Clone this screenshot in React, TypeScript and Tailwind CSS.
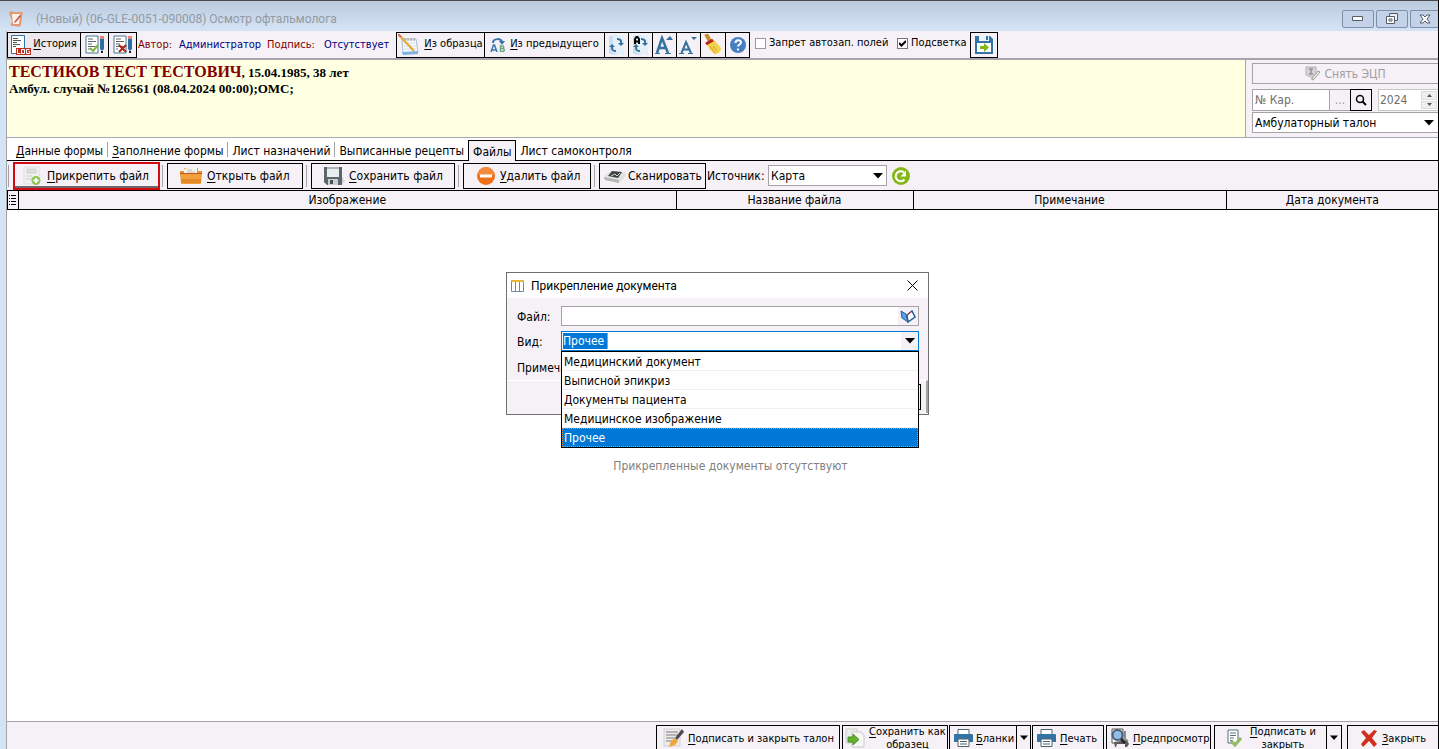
import type { ReactNode } from "react";

const files = ["Медицинский документ", "Выписной эпикриз", "Документы пациента", "Медицинское изображение", "Прочее"];

const tabs = [
  { key: "Д", rest: "анные формы" },
  { key: "З", rest: "аполнение формы" },
  { key: "", rest: "Лист назначений" },
  { key: "", rest: "Выписанные рецепты" },
  { key: "", rest: "Файлы", active: true },
  { key: "", rest: "Лист самоконтроля", last: true },
];

function Hot({ k, children }: { k: string; children: ReactNode }) {
  return (
    <span className="whitespace-nowrap">
      <u className="underline-offset-2">{k}</u>
      {children}
    </span>
  );
}

function Arrow({ small }: { small?: boolean }) {
  return (
    <svg width={small ? 8 : 10} height="6" viewBox="0 0 10 6" className="shrink-0">
      <path d="M0 0h10L5 5.5z" fill="#000" />
    </svg>
  );
}

/* ---------- icons ---------- */

function AppIcon() {
  return (
    <svg width="16" height="18" viewBox="0 0 16 18">
      <path d="M1 3c1-2 3-2 5-1h7c2 0 2 2 1 4l-1 9c-1 2-3 2-5 1H4c-2 0-1-3 0-5z" fill="#e39a74" />
      <path d="M4 4h8l-1 10H5z" fill="#fdf1e8" />
      <path d="M12 5l-5 6-1 2 2-1 5-6z" fill="#b5483a" />
    </svg>
  );
}

function LogIcon() {
  return (
    <svg width="20" height="20" viewBox="0 0 20 20">
      <path d="M.5.5h13v18H.5z" fill="#fff" stroke="#3574a8" />
      <path d="M2 3.500h5M2 5.500h8M2 7.500h4M2 9.500h7M2 11.500h3" stroke="#555" />
      <path d="M5 13h15v7H5z" fill="#b9321f" />
      <path d="M6.500 14v4.500h3M10.500 14.500h3v4h-3zM18.500 14.500h-3v4h3v-2h-1" fill="none" stroke="#fff" />
    </svg>
  );
}

function SheetIcon({ ok }: { ok?: boolean }) {
  return (
    <svg width="20" height="20" viewBox="0 0 20 20">
      <path d="M1 1h12v17H1z" fill="#fff" stroke="#47788f" />
      <path d="M3 4h5M3 6.500h8M3 9h4M3 11.500h7M3 14h2" stroke="#666" />
      <path d="M15 1h4v3h-4z" fill="#e8837c" />
      <path d="M15 4h4v10l-2 2-2-2z" fill="#2d6da3" />
      <path d="M16 16h2v2h-2z" fill="#222" />
      {ok ? (
        <path d="M5 13l3 3 5-6" fill="none" stroke="#7db53c" strokeWidth="2" />
      ) : (
        <path d="M6 10l7 7M13 10l-7 7" stroke="#b02418" strokeWidth="2" />
      )}
    </svg>
  );
}

function NotepadIcon() {
  return (
    <svg width="22" height="22" viewBox="0 0 22 22">
      <path d="M4 5h14l2 13-15 2z" fill="#f4f8fc" stroke="#a9bfd4" />
      <path d="M4 18l16-1v3l-15 1z" fill="#7fb2dd" />
      <path d="M6 9h11M6 12h12M6 15h12" stroke="#d5dee8" />
      <path d="M7 4v3M10 4v3M13 4v3M16 4v3" stroke="#999" />
      <path d="M1 1l15 16" stroke="#e8a62c" strokeWidth="2" />
      <path d="M0 0l3 3" stroke="#d9695a" strokeWidth="2" />
    </svg>
  );
}

function PrevIcon() {
  return (
    <svg width="16" height="14" viewBox="0 0 16 14">
      <path d="M3 5c0-5 9-5 9-1" fill="none" stroke="#3777ad" strokeWidth="2" />
      <path d="M9 3h6l-3 4z" fill="#3777ad" />
      <path d="M1 14l2.500-7h1l2.500 7M2 12h4" fill="none" stroke="#3777ad" strokeWidth="1.500" />
      <path d="M10.500 8h2.500q1.500 1.500 0 2.500h-2.500h3q1.500 1.500 0 3h-3z" fill="none" stroke="#6aa585" strokeWidth="1.500" />
    </svg>
  );
}

function SwapIcon({ bold }: { bold?: boolean }) {
  return (
    <svg width="18" height="22" viewBox="0 0 18 22">
      <path d="M1 2l8-1v20l-8-1z" fill="#c9e0f3" />
      <path d="M5 2l11-1v20l-11-2z" fill="#e3f0fa" />
      <path d="M9 5c4 0 4.500 2 4 5M8 17c-4 0-4-2-4-5" fill="none" stroke="#356f9b" strokeWidth="2" />
      <path d="M10 9h6l-3 3zM1 13h6l-3-3z" fill="#356f9b" />
      {bold && <path d="M3 10V5l1.500-2h1L7 5v5M3 7.500h4" fill="none" stroke="#000" strokeWidth="2" />}
    </svg>
  );
}

function FontIcon({ up }: { up?: boolean }) {
  return up ? (
    <svg width="20" height="20" viewBox="0 0 20 20">
      <path d="M2 18L7 3l6 15M4 13h7" fill="none" stroke="#33719f" strokeWidth="2.500" />
      <path d="M0 18.500h5M10 18.500h6" stroke="#33719f" />
      <path d="M11 5l4-4 3 4z" fill="#33719f" />
    </svg>
  ) : (
    <svg width="20" height="20" viewBox="0 0 20 20">
      <path d="M2.500 18L7 7l5 11M4 14.500h6" fill="none" stroke="#33719f" strokeWidth="2" />
      <path d="M0 18.500h5M9 18.500h5" stroke="#33719f" />
      <path d="M12 2h6l-3 3z" fill="#33719f" />
    </svg>
  );
}

function BroomIcon() {
  return (
    <svg width="20" height="22" viewBox="0 0 20 22">
      <path d="M3 0l5 9" stroke="#c98b2b" strokeWidth="4" />
      <path d="M4 10l7-4 7 8c0 4-3 6-7 6-3-3-6-6-7-10z" fill="#f3d34a" />
      <path d="M7 12l5 7M10 12l4 5" stroke="#cfa233" />
      <path d="M3 10l7-4" stroke="#b3261a" strokeWidth="3" />
    </svg>
  );
}

function HelpIcon() {
  return (
    <svg width="18" height="18" viewBox="0 0 18 18">
      <circle cx="9" cy="9" r="8" fill="#4680c2" />
      <path d="M6.500 7c0-3.500 5.500-3.500 5.500-.5 0 2-3 2-3 4M9 12.500v2" fill="none" stroke="#fff" strokeWidth="2" />
    </svg>
  );
}

function SaveIcon() {
  return (
    <svg width="18" height="18" viewBox="0 0 18 18">
      <path d="M0 0h15l3 3v15H0z" fill="#3273a8" />
      <path d="M4 0h10v5H4z" fill="#eef3f8" />
      <path d="M11 0h2v4h-2z" fill="#3273a8" />
      <path d="M2 7h14v9H2z" fill="#fff" />
      <path d="M5 10h4V7l5 4.500L9 16v-3H5z" fill="#84b818" />
    </svg>
  );
}

function StampIcon() {
  return (
    <svg width="15" height="15" viewBox="0 0 15 15">
      <path d="M1 1h10v8l-3 3-7-3z" fill="#d6d4d6" stroke="#b5b3b5" />
      <path d="M4 3h4M6 3v5M4 8h4" stroke="#959395" strokeWidth="1.500" />
      <path d="M13 5L7 12l0 2 2-1 6-7z" fill="#eee" stroke="#999" />
    </svg>
  );
}

function AttachIcon() {
  return (
    <svg width="18" height="20" viewBox="0 0 18 20">
      <path d="M1 1h15v17H1z" fill="#f1f0f1" stroke="#e0dfe0" />
      <path d="M4 3h9v4H4zM3 10h6M3 13h6" fill="#dedede" stroke="#d0d0d0" />
      <circle cx="13" cy="14.500" r="4.500" fill="#8fc653" />
      <path d="M13 12v5M10.500 14.500h5" stroke="#fff" strokeWidth="2" />
    </svg>
  );
}

function FolderIcon() {
  return (
    <svg width="22" height="19" viewBox="0 0 22 19">
      <path d="M0 5h4V2h14v3h4v4H0z" fill="#e89133" />
      <path d="M4 3l9-3 4 2v6H4z" fill="#f6f2ee" />
      <path d="M7 4h5M7 6h8" stroke="#c7bfb9" />
      <path d="M0 8h22l-1 9q0 1-1 1H2q-1 0-1-1z" fill="#f0a03c" />
      <path d="M0 7.500h22" stroke="#c2571b" />
      <path d="M1 13h20v4H1z" fill="#e28828" />
    </svg>
  );
}

function DiskIcon() {
  return (
    <svg width="22" height="20" viewBox="0 0 22 20">
      <path d="M16 17l3-6 3 4-4 4z" fill="#d5d3d6" />
      <path d="M1 1h18v18H4l-3-3z" fill="#5b666d" />
      <path d="M4 1h12v10H4z" fill="#e8eef0" />
      <path d="M4 1h12v2H4z" fill="#a9b6bb" />
      <path d="M5 13h10v6H5z" fill="#c9cfd2" />
      <path d="M7 14h3v4H7z" fill="#475259" />
    </svg>
  );
}

function MinusIcon() {
  return (
    <svg width="20" height="20" viewBox="0 0 20 20">
      <circle cx="10" cy="10" r="9" fill="#f0701a" />
      <path d="M2 9a8 8 0 0 1 16 0z" fill="#f58a3c" />
      <path d="M4 8.500h12v3H4z" fill="#fff" />
    </svg>
  );
}

function ScannerIcon() {
  return (
    <svg width="22" height="17" viewBox="0 0 22 17">
      <path d="M0 9l6-4 15 0 1 4-7 7-14-3z" fill="#e3e2e2" />
      <path d="M0 10l15 3v3l-14-3z" fill="#b5b5b5" />
      <path d="M4 9l4-5 10 1-4 6z" fill="#3e4241" />
      <path d="M7 9l4-2 2 2 3-3" stroke="#cfcfcf" fill="none" />
    </svg>
  );
}

function RefreshIcon() {
  return (
    <svg width="18" height="18" viewBox="0 0 18 18">
      <circle cx="9" cy="9" r="9" fill="#84b818" />
      <path d="M12.500 12.500A5 5 0 1 1 12 5.500" fill="none" stroke="#fff" strokeWidth="2" />
      <path d="M14 3.500v6H8.500z" fill="#fff" />
    </svg>
  );
}

function SignIcon() {
  return (
    <svg width="21" height="20" viewBox="0 0 21 20">
      <path d="M1 1h16v17H1z" fill="#ececec" stroke="#d2d2d2" />
      <path d="M3 4h12M3 7h12M3 10h9M3 13h6" stroke="#7d7d7d" />
      <path d="M19 1l-7 9 2 2 7-8z" fill="#4b4a4e" />
      <path d="M12 10l3 3-3 4-6 2 2-6z" fill="#f0a53a" />
    </svg>
  );
}

function CopyIcon() {
  return (
    <svg width="20" height="20" viewBox="0 0 20 20">
      <path d="M1 1h11v14H1z" fill="#ececec" stroke="#cfcfcf" />
      <path d="M7 4h9l3 3v12H7z" fill="#f6f6f6" stroke="#c9c9c9" />
      <path d="M3 9h5V6l6 5.500L8 17v-3H3z" fill="#63b32e" stroke="#4a8f22" />
    </svg>
  );
}

function PrinterIcon() {
  return (
    <svg width="19" height="18" viewBox="0 0 19 18">
      <path d="M4 .5h11V6H4z" fill="#fff" stroke="#4b6470" />
      <path d="M1 5h17q1 0 1 1v7H0V6q0-1 1-1z" fill="#3473a6" />
      <path d="M4 10h11v7.500H4z" fill="#fff" stroke="#4b6470" />
      <path d="M6 12.500h7M6 15h7" stroke="#4b6470" />
    </svg>
  );
}

function PreviewIcon() {
  return (
    <svg width="20" height="20" viewBox="0 0 20 20">
      <path d="M2 1h11v14H2z" fill="#fff" stroke="#555" />
      <path d="M4 14l13-2 2 4-2 3H5z" fill="#5b5b5e" />
      <path d="M7 16h8v3H6z" fill="#f2f2f2" />
      <path d="M15 3v8l3 2" stroke="#8b8f94" strokeWidth="2" fill="none" />
      <circle cx="7.500" cy="7" r="5" fill="#8fbfe6" stroke="#4c5f76" strokeWidth="2" />
      <path d="M11 11l4 4" stroke="#26282b" strokeWidth="3" />
    </svg>
  );
}

function DoneIcon() {
  return (
    <svg width="15" height="18" viewBox="0 0 15 18">
      <path d="M1 1h10v13H1z" fill="#fff" stroke="#56707c" />
      <path d="M3 4h6M3 6.500h6M3 9h4M3 11.500h3" stroke="#56707c" />
      <path d="M4 12l4 4 6-7" fill="none" stroke="#93bb63" strokeWidth="3" />
    </svg>
  );
}

function CrossIcon() {
  return (
    <svg width="18" height="18" viewBox="0 0 18 18">
      <path d="M1 3l3-2 5 5 5-5 3 1-5 7 5 6-3 3-5-6-6 6-2-3 5-6z" fill="#cf2f1c" />
    </svg>
  );
}

/* ---------- parts ---------- */

function WinButton({ label, children }: { label: string; children: ReactNode }) {
  return (
    <button aria-label={label} className="flex h-[18px] w-8 items-center justify-center rounded-xs border border-[#7d8fa9] bg-[#c3d2e6]">
      {children}
    </button>
  );
}

function TitleBar() {
  return (
    <div className="flex h-[31px] shrink-0 items-center border-t border-[#4a4a4a] bg-linear-to-b from-[#bccadf] to-[#d5e4f5] pt-1.5 pl-2">
      <AppIcon />
      <h1 className="ml-3 flex-1 font-[Roboto,sans-serif] text-[12px] text-[#929aa4]">(Новый) (06-GLE-0051-090008) Осмотр офтальмолога</h1>
      <div className="flex gap-0.5">
        <WinButton label="Свернуть">
          <svg width="12" height="6" viewBox="0 0 12 6">
            <path d="M.5.5h10v4H.5z" fill="#fff" stroke="#555c66" />
          </svg>
        </WinButton>
        <WinButton label="Восстановить">
          <svg width="12" height="12" viewBox="0 0 12 12">
            <path d="M3.500.5h8v7h-8z" fill="#eef" stroke="#555c66" />
            <path d="M.5 3.500h8v7h-8zM3 6h3v2H3z" fill="#fff" stroke="#555c66" />
          </svg>
        </WinButton>
        <button aria-label="Закрыть окно" className="flex h-[18px] w-7 items-center justify-center rounded-l-xs border border-r-0 border-[#7d8fa9] bg-[#c3d2e6]">
          <svg width="12" height="10" viewBox="0 0 12 10">
            <path d="M1 1h3l2 2 2-2h3L8 5l3 4H8L6 7 4 9H1l3-4z" fill="#fff" stroke="#555c66" />
          </svg>
        </button>
      </div>
    </div>
  );
}

function ToolButton({ label, className, children }: { label?: string; className: string; children: ReactNode }) {
  return (
    <button aria-label={label} className={`-mr-px flex h-[26px] shrink-0 items-center justify-center border border-black ${className}`}>
      {children}
    </button>
  );
}

function FormToolbar() {
  return (
    <div className="flex h-[29px] shrink-0 items-center overflow-hidden border-b-2 border-[#a6a3ab] bg-[#f5f1f6] text-[11px] whitespace-nowrap">
      <ToolButton className="w-[74px] gap-0.5 bg-[#ece8ee]">
        <LogIcon />
        <Hot k="И">стория</Hot>
      </ToolButton>
      <ToolButton label="Проверить" className="w-[29px]"><SheetIcon ok /></ToolButton>
      <ToolButton label="Отменить" className="w-[29px]"><SheetIcon /></ToolButton>
      <div className="flex w-[260px] shrink-0 items-center pt-px pl-0.5">
        <span className="w-[41px] text-[#800000]">Автор:</span>
        <span className="w-[88px] text-[#000080]">Администратор</span>
        <span className="w-[57px] text-[#800000]">Подпись:</span>
        <span className="text-[#000080]">Отсутствует</span>
      </div>
      <ToolButton className="w-[89px] gap-1">
        <NotepadIcon />
        <Hot k="И">з образца</Hot>
      </ToolButton>
      <ToolButton className="w-[121px] gap-1">
        <PrevIcon />
        <Hot k="И">з предыдущего</Hot>
      </ToolButton>
      <ToolButton label="Заменить" className="w-[25px]"><SwapIcon /></ToolButton>
      <ToolButton label="Заменить регистр" className="w-[25px]"><SwapIcon bold /></ToolButton>
      <ToolButton label="Крупнее" className="w-[25px]"><FontIcon up /></ToolButton>
      <ToolButton label="Мельче" className="w-[25px]"><FontIcon /></ToolButton>
      <ToolButton label="Очистить" className="w-[26px]"><BroomIcon /></ToolButton>
      <ToolButton label="Справка" className="w-[25px]"><HelpIcon /></ToolButton>
      <label className="ml-1.5 flex w-[142px] shrink-0 items-center gap-[3px] pb-0.5">
        <input type="checkbox" className="size-[11px] shrink-0 appearance-none border border-[#9a9a9a] bg-white" />
        Запрет автозап. полей
      </label>
      <label className="flex w-[73px] shrink-0 items-center gap-[3px] pb-0.5">
        <span className="relative flex">
          <input type="checkbox" defaultChecked className="size-[11px] shrink-0 appearance-none border border-[#777] bg-white" />
          <svg width="7" height="7" viewBox="0 0 7 7" className="pointer-events-none absolute top-0.5 left-0.5">
            <path d="M0 3l2.500 2.500L7 1" fill="none" stroke="#000" strokeWidth="2" />
          </svg>
        </span>
        Подсветка
      </label>
      <ToolButton label="Сохранить" className="w-7"><SaveIcon /></ToolButton>
    </div>
  );
}

function PatientPanel() {
  return (
    <div className="flex h-[78px] shrink-0 border-b border-[#a9a7b5] bg-[#f5f1f6] text-[12px]">
      <div className="flex-1 border-r border-[#a6a3ab] bg-[#ffffe1] pt-1 pl-0.5 font-['Liberation_Serif',serif] text-[13px] leading-4 font-bold">
        <p>
          <span className="text-[16px] leading-4 text-[#800000]">ТЕСТИКОВ ТЕСТ ТЕСТОВИЧ</span>, 15.04.1985, 38 лет
        </p>
        <p>Амбул. случай №126561 (08.04.2024 00:00);ОМС;</p>
      </div>
      <div className="w-[192px] pt-[3px] pl-1.5">
        <button disabled className="flex h-[21px] w-full items-center justify-center gap-1 border border-r-0 border-[#a6a3a6] text-[#a09da0]">
          <StampIcon />
          Снять ЭЦП
        </button>
        <div className="mt-[5px] flex h-[22px]">
          <input aria-label="Номер карты" placeholder="№ Кар." className="w-[78px] border border-[#a6a3a6] bg-white px-0.5 placeholder:text-[#6d6d6d]" />
          <button aria-label="Выбрать" className="w-5 border-y border-[#a6a3a6] text-[#999]">...</button>
          <button aria-label="Найти" className="flex w-[22px] items-center justify-center border border-black">
            <svg width="12" height="12" viewBox="0 0 12 12">
              <circle cx="5" cy="5" r="3.500" fill="none" stroke="#000" strokeWidth="1.500" />
              <path d="M7.500 7.500l3.500 3.500" stroke="#000" strokeWidth="2" />
            </svg>
          </button>
          <div className="ml-1.5 flex flex-1 border border-r-0 border-[#c9c6c9] bg-white">
            <input aria-label="Год" defaultValue="2024" className="w-[42px] px-px text-[#6d6d6d]" />
            <div className="flex w-4 flex-col gap-px py-px">
              <button aria-label="Больше" className="flex flex-1 items-center justify-center border border-[#dcdcdc] bg-[#f0eef0]">
                <svg width="5" height="3" viewBox="0 0 5 3"><path d="M0 3h5L2.500 0z" fill="#555" /></svg>
              </button>
              <button aria-label="Меньше" className="flex flex-1 items-center justify-center border border-[#dcdcdc] bg-[#f0eef0]">
                <svg width="5" height="3" viewBox="0 0 5 3"><path d="M0 0h5L2.500 3z" fill="#555" /></svg>
              </button>
            </div>
          </div>
        </div>
        <div className="relative mt-px">
          <select aria-label="Тип талона" className="h-[21px] w-full appearance-none border border-r-0 border-[#a6a3a6] bg-white pl-0.5">
            <option>Амбулаторный талон</option>
          </select>
          <span className="pointer-events-none absolute top-2 right-1"><Arrow /></span>
        </div>
      </div>
    </div>
  );
}

function Tabs() {
  return (
    <div role="tablist" className="flex h-[23px] shrink-0 items-end border-b border-black bg-white pl-[5px] text-[12px]">
      {tabs.map((tab) =>
        tab.active ? (
          <button key={tab.rest} role="tab" aria-selected="true" className="-mb-px h-[21px] border border-b-0 border-black bg-[#f5f1f6] px-1 pt-px">
            {tab.rest}
          </button>
        ) : (
          <button key={tab.rest} role="tab" className="flex h-[18px] items-center whitespace-nowrap">
            <span className="px-1">{tab.key && <u className="underline-offset-2">{tab.key}</u>}{tab.rest}</span>
            {!tab.last && tab.rest !== "Выписанные рецепты" && <i className="mb-1 h-[15px] w-px bg-[#a6a3a6]" />}
          </button>
        )
      )}
    </div>
  );
}

function Sep() {
  return <i className="mr-1 ml-[3px] h-[22px] w-px shrink-0 bg-[#a6a3a6]" />;
}

function FileToolbar() {
  return (
    <div className="flex h-[29px] shrink-0 items-center bg-[#f5f1f6] text-[12px] whitespace-nowrap">
      <i className="mr-1 ml-px h-[22px] w-px bg-[#a6a3a6]" />
      <button className="flex h-7 w-[147px] items-center gap-1.5 border-2 border-[#d20a11] pl-2 shadow-[inset_0_-2px_0_#6b686b]">
        <AttachIcon />
        <Hot k="П">рикрепить файл</Hot>
      </button>
      <i className="mr-1 ml-0.5 h-[22px] w-px bg-[#a6a3a6]" />
      <button className="flex h-[26px] w-[136px] items-center gap-[5px] border border-black pl-3"><FolderIcon /><Hot k="О">ткрыть файл</Hot></button>
      <Sep />
      <button className="flex h-[26px] w-36 items-center gap-1 border border-black pl-[11px]"><DiskIcon /><Hot k="С">охранить файл</Hot></button>
      <Sep />
      <button className="flex h-[26px] w-32 items-center gap-1 border border-black pl-3"><MinusIcon /><Hot k="У">далить файл</Hot></button>
      <Sep />
      <button className="flex h-[26px] w-[107px] items-center gap-0.5 border border-black pl-1"><ScannerIcon />Сканировать</button>
      <label htmlFor="source" className="ml-px w-[61px]">Источник:</label>
      <div className="relative">
        <select id="source" className="block h-[21px] w-[119px] appearance-none border border-[#a6a3a6] bg-white pl-0.5">
          <option>Карта</option>
        </select>
        <span className="pointer-events-none absolute top-2 right-1"><Arrow /></span>
      </div>
      <button aria-label="Обновить" className="ml-[5px]"><RefreshIcon /></button>
    </div>
  );
}

function FilesTable() {
  return (
    <div className="flex min-h-0 flex-1 flex-col border-b border-[#a6a3a6] bg-white text-[12px]">
      <table className="w-full table-fixed border-collapse bg-[#f5f1f6]">
        <thead>
          <tr className="h-[19px] leading-4">
            <th className="w-[11px] border border-black p-0">
              <svg width="8" height="10" viewBox="0 0 8 10" className="mx-auto">
                <path d="M0 .5h1M2 .5h5M0 3.500h1M2 3.500h5M0 6.500h1M2 6.500h5M0 9.500h1M2 9.500h5" stroke="#000" />
              </svg>
            </th>
            <th className="border border-black p-0 font-normal">Изображение</th>
            <th className="w-[237px] border border-black p-0 font-normal">Название файла</th>
            <th className="w-[313px] border border-black p-0 font-normal">Примечание</th>
            <th className="w-[212px] border border-r-0 border-black p-0 font-normal">Дата документа</th>
          </tr>
        </thead>
      </table>
      <p className="flex flex-1 items-center justify-center pl-4 text-[#808080]">Прикрепленные документы отсутствуют</p>
    </div>
  );
}

function FooterButton({ className, children }: { className: string; children: ReactNode }) {
  return <button className={`flex h-[26px] shrink-0 items-center border border-black leading-[13px] ${className}`}>{children}</button>;
}

function Footer() {
  return (
    <div className="flex h-[27px] shrink-0 items-start justify-end overflow-hidden bg-[#f5f1f6] pt-[3px] text-[11px]">
      <FooterButton className="mr-0.5 w-[184px] gap-1 pl-1.5"><SignIcon /><Hot k="П">одписать и закрыть талон</Hot></FooterButton>
      <FooterButton className="mr-px w-[106px] gap-1 pl-0.5">
        <CopyIcon />
        <span><Hot k="С">охранить как</Hot><br />образец</span>
      </FooterButton>
      <FooterButton className="w-[68px] gap-[3px] pl-1"><PrinterIcon /><Hot k="Б">ланки</Hot></FooterButton>
      <FooterButton className="mr-px -ml-px w-[15px] justify-center"><Arrow small /></FooterButton>
      <FooterButton className="mr-0.5 w-[72px] gap-1 pl-1"><PrinterIcon /><Hot k="П">ечать</Hot></FooterButton>
      <FooterButton className="mr-[3px] w-[105px] gap-[3px] pl-[3px]"><PreviewIcon /><Hot k="П">редпросмотр</Hot></FooterButton>
      <FooterButton className="w-[113px] gap-2 pl-3">
        <DoneIcon />
        <span><Hot k="П">одписать и</Hot><br />закрыть</span>
      </FooterButton>
      <FooterButton className="mr-[5px] -ml-px w-4 justify-center"><Arrow small /></FooterButton>
      <FooterButton className="w-[91px] gap-1 border-r-0 pl-3"><CrossIcon /><Hot k="З">акрыть</Hot></FooterButton>
    </div>
  );
}

function AttachDialog() {
  return (
    <div role="dialog" aria-labelledby="dialog-title" className="absolute top-[272px] left-[506px] h-[143px] w-[423px] border border-[#6f6f6f] bg-[#f5f1f6] text-[12px]">
      <div className="flex h-[25px] items-center bg-white px-1">
        <svg width="13" height="13" viewBox="0 0 13 13">
          <path d="M.5 1.500h12v11H.5zM4.500 2v10M8.500 2v10" fill="#fff" stroke="#6d87a8" />
          <path d="M0 1h13v2H0z" fill="#e3b932" />
        </svg>
        <h2 id="dialog-title" className="ml-[7px] flex-1 font-[Roboto,sans-serif]">Прикрепление документа</h2>
        <button aria-label="Закрыть диалог" className="mr-1.5">
          <svg width="11" height="11" viewBox="0 0 11 11">
            <path d="M.5.5l10 10M10.500.5l-10 10" stroke="#000" />
          </svg>
        </button>
      </div>
      <div className="mt-2 mr-[9px] ml-2.5 flex items-center">
        <label htmlFor="file" className="w-11 pt-px">Файл:</label>
        <div className="flex h-5 flex-1 items-center border border-[#a6a3a6] bg-white">
          <input id="file" className="min-w-0 flex-1" />
          <button aria-label="Выбрать файл" className="flex h-full w-5 items-center justify-center bg-[#f5f1f6]">
            <svg width="16" height="13" viewBox="0 0 16 13">
              <path d="M1 1l5 3 2 8-6-4z" fill="#5aa2e6" stroke="#245c9c" />
              <path d="M7 5l5-4 3 6-7 5z" fill="#fff" stroke="#245c9c" strokeWidth="1.500" />
              <path d="M7 5l4-3" stroke="#d33" />
            </svg>
          </button>
        </div>
      </div>
      <div className="mt-[5px] mr-[9px] ml-2.5 flex items-center">
        <label htmlFor="kind" className="w-11 pt-px">Вид:</label>
        <div className="relative flex h-5 flex-1 items-center border border-[#0078d7] bg-white pl-px">
          <input id="kind" role="combobox" aria-expanded="true" defaultValue="Прочее" className="h-4 w-[45px] border-r border-[#ff8728] bg-[#0078d7] text-white" />
          <button aria-label="Открыть список" className="ml-auto flex h-full w-[17px] items-center justify-center bg-[#f5f1f6]"><Arrow /></button>
          <ul role="listbox" className="absolute top-[19px] -right-px -left-px z-10 border border-black bg-white">
            {files.map((name, i) => (
              <li
                key={name}
                role="option"
                aria-selected={i === 4}
                className={i === 4 ? "h-[19px] border border-dotted border-[#ff8728] bg-[#0078d7] pl-px leading-[18px] text-white" : "h-[19px] border-b border-[#f0f0f0] pl-0.5 leading-5"}
              >
                {name}
              </li>
            ))}
          </ul>
        </div>
      </div>
      <p className="mt-2 ml-2.5 w-11 overflow-hidden whitespace-nowrap">Примечание:</p>
      <div className="mt-[3px] flex h-[33px] items-end justify-end border-t border-r-2 border-t-white border-r-[#a6a3a6] pr-[5px] pb-[3px]">
        <button aria-label="Отмена" className="h-[26px] w-20 border border-black" />
      </div>
    </div>
  );
}

export default function App() {
  return (
    <div className="relative flex h-screen flex-col overflow-hidden border-r border-black bg-[#d5e4f5] font-['DejaVu_Sans_Condensed','DejaVu_Sans',sans-serif] text-black">
      <TitleBar />
      <div className="ml-1.5 flex min-h-0 flex-1 flex-col border-l border-[#a6a3ab]">
        <FormToolbar />
        <PatientPanel />
        <Tabs />
        <FileToolbar />
        <FilesTable />
        <Footer />
      </div>
      <AttachDialog />
    </div>
  );
}
